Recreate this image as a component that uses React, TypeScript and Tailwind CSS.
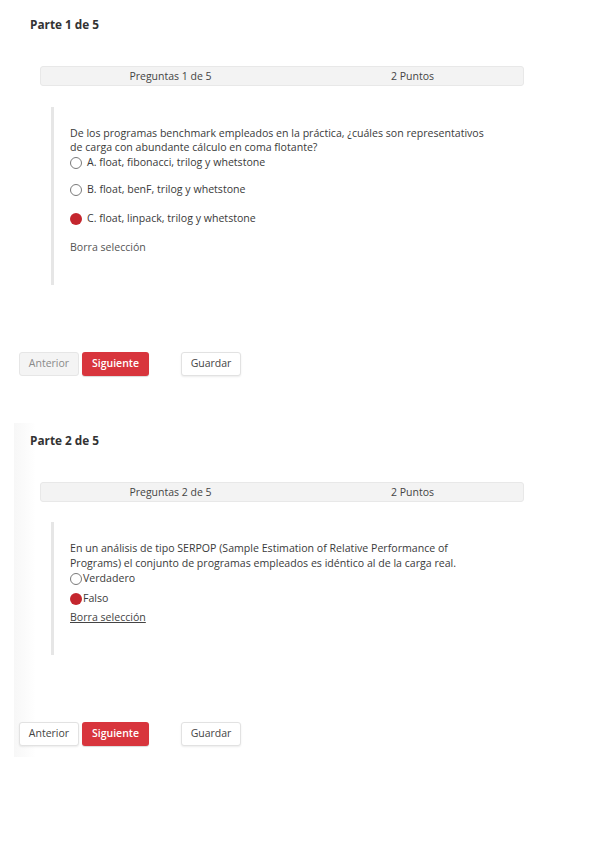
import React from 'react';

interface Opt {
  label: string;
  selected?: boolean;
}

const Radio: React.FC<{ selected?: boolean }> = ({ selected }) =>
  selected ? (
    <span className="inline-block h-[12px] w-[12px] shrink-0 rounded-full bg-[#c4262e]" />
  ) : (
    <span className="inline-block h-[12px] w-[12px] shrink-0 rounded-full border border-[#7a7a7a] bg-white" />
  );

const InfoBar: React.FC<{ n: number }> = ({ n }) => (
  <div className="grid h-[20px] w-[484px] grid-cols-2 rounded-[3px] border border-[#e8e8e8] bg-[#f3f3f3] text-[10.5px] leading-[18px] text-[#444]">
    <div className="pl-[18px] text-center">Preguntas {n} de 5</div>
    <div className="pl-[20px] text-center">2 Puntos</div>
  </div>
);

const Buttons: React.FC<{ prevActive?: boolean }> = ({ prevActive }) => (
  <div className="flex items-center text-[10.5px]">
    {prevActive ? (
      <button className="h-[24px] w-[60px] rounded-[3px] border border-[#e2e2e2] bg-white text-[#444] shadow-[0_1px_2px_rgba(0,0,0,0.08)]">Anterior</button>
    ) : (
      <button className="h-[24px] w-[60px] rounded-[3px] border border-[#e6e6e6] bg-[#f4f4f4] text-[#8a8a8a]">Anterior</button>
    )}
    <button className="ml-[3px] h-[24px] w-[67px] rounded-[3px] bg-[#d8353d] font-semibold text-white shadow-[0_1px_1px_rgba(0,0,0,0.15)]">Siguiente</button>
    <button className="ml-[32px] h-[24px] w-[60px] rounded-[3px] border border-[#e2e2e2] bg-white text-[#444] shadow-[0_1px_2px_rgba(0,0,0,0.08)]">Guardar</button>
  </div>
);

export default function App() {
  const opts1: Opt[] = [
    { label: 'A. float, fibonacci, trilog y whetstone' },
    { label: 'B. float, benF, trilog y whetstone' },
    { label: 'C. float, linpack, trilog y whetstone', selected: true },
  ];

  return (
    <div className="min-h-[848px] w-[599px] bg-white text-[#3a3a3a]" style={{ fontFamily: '"Open Sans", "Noto Sans", sans-serif' }}>
      {/* Parte 1 */}
      <div className="pl-[30px] pt-[17px] text-[11.8px] font-bold leading-[14px] text-[#333]">Parte 1 de 5</div>
      <div className="ml-[40px] mt-[35px]">
        <InfoBar n={1} />
      </div>
      <div className="ml-[51px] mt-[21px] h-[178px] border-l-[3px] border-[#e6e6e6] pl-[16px] pt-[19px] text-[10.6px]">
        <p className="leading-[14px] text-[#3a3a3a]">
          De los programas benchmark empleados en la práctica, ¿cuáles son representativos
          <br />
          de carga con abundante cálculo en coma flotante?
        </p>
        <div className="mt-[1px] flex h-[16px] items-center gap-[5px]">
          <Radio selected={opts1[0].selected} />
          <span>{opts1[0].label}</span>
        </div>
        <div className="mt-[11px] flex h-[16px] items-center gap-[5px]">
          <Radio selected={opts1[1].selected} />
          <span>{opts1[1].label}</span>
        </div>
        <div className="mt-[13px] flex h-[16px] items-center gap-[5px]">
          <Radio selected={opts1[2].selected} />
          <span>{opts1[2].label}</span>
        </div>
        <div className="mt-[12px] leading-[16px] text-[#555]">Borra selección</div>
      </div>
      <div className="ml-[19px] mt-[67px]">
        <Buttons />
      </div>

      {/* Parte 2 */}
      <div className="ml-[14px] mt-[47px] w-[539px] bg-[linear-gradient(to_right,#f7f7f7,#ffffff_22px)] pb-[11px]">
        <div className="pl-[16px] pt-[10px] text-[11.8px] font-bold leading-[14px] text-[#333]">Parte 2 de 5</div>
        <div className="ml-[26px] mt-[35px]">
          <InfoBar n={2} />
        </div>
        <div className="ml-[37px] mt-[20px] h-[133px] border-l-[3px] border-[#e6e6e6] pl-[16px] pt-[19px] text-[10.6px]">
          <p className="leading-[15px]">
            En un análisis de tipo SERPOP (Sample Estimation of Relative Performance of
            <br />
            Programs) el conjunto de programas empleados es idéntico al de la carga real.
          </p>
          <div className="flex h-[16px] items-center gap-[1px]">
            <Radio />
            <span>Verdadero</span>
          </div>
          <div className="mt-[4px] flex h-[16px] items-center gap-[1px]">
            <Radio selected />
            <span>Falso</span>
          </div>
          <div className="mt-[2px] leading-[16px] text-[#444] underline">Borra selección</div>
        </div>
        <div className="ml-[5px] mt-[67px]">
          <Buttons prevActive />
        </div>
      </div>
    </div>
  );
}
